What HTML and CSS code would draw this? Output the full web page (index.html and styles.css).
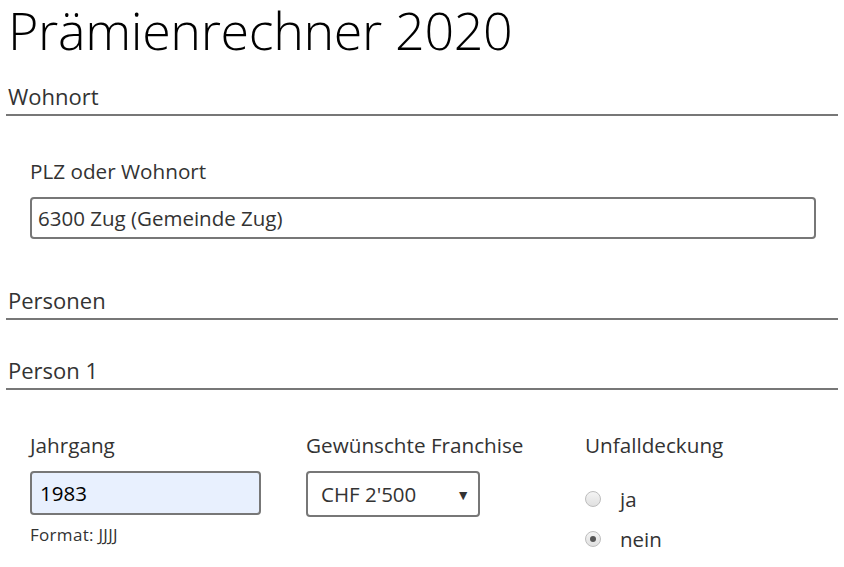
FILE: index.html
```html
<!DOCTYPE html>
<html lang="de">
<head>
<meta charset="utf-8">
<title>Prämienrechner 2020</title>
<link rel="stylesheet" href="styles.css">
</head>
<body>
<div class="page">
  <h1 class="title">Prämienrechner 2020</h1>

  <h2 class="section first">Wohnort</h2>
  <div class="fields">
    <div class="field wide">
      <label class="label" for="plz">PLZ oder Wohnort</label>
      <input class="input" id="plz" type="text" value="6300 Zug (Gemeinde Zug)">
    </div>
  </div>

  <h2 class="section persons">Personen</h2>
  <h2 class="section">Person 1</h2>
  <div class="fields grid">
    <div class="field">
      <label class="label" for="jahr">Jahrgang</label>
      <input class="input year" id="jahr" type="text" value="1983">
      <div class="hint">Format: JJJJ</div>
    </div>
    <div class="field">
      <label class="label" for="fr">Gewünschte Franchise</label>
      <div class="select">
        <span class="select-value">CHF 2'500</span>
        <span class="select-arrow">▼</span>
      </div>
    </div>
    <div class="field">
      <div class="label">Unfalldeckung</div>
      <div class="radios">
        <label class="radio"><span class="dot"></span><span>ja</span></label>
        <label class="radio"><span class="dot checked"></span><span>nein</span></label>
      </div>
    </div>
  </div>
</div>
</body>
</html>
```
FILE: styles.css
```css
html, body {
  margin: 0;
  padding: 0;
  background: #fff;
}
body {
  font-family: "Open Sans", "Noto Sans", sans-serif;
  color: #333;
}
.page {
  padding: 0 6px;
  width: 832px;
}
.title {
  margin: 0;
  padding: 0 0 0 2px;
  font-size: 52px;
  line-height: 60px;
  font-weight: 300;
  color: #000;
  letter-spacing: -0.35px;
}
.section {
  margin: 36px 0 0 0;
  padding: 0 0 4px 2px;
  font-size: 22px;
  font-weight: 400;
  line-height: 28px;
  color: #333;
  border-bottom: 2px solid #777;
}
.section.first {
  margin-top: 22px;
}
.section.persons {
  margin-top: 47px;
}
.fields {
  padding: 41px 0 0 24px;
}
.field {
  display: flex;
  flex-direction: column;
}
.wide {
  width: 786px;
}
.label {
  font-size: 20.7px;
  line-height: 28px;
  color: #333;
  margin-bottom: 12px;
}
.input {
  box-sizing: border-box;
  height: 42px;
  border: 2px solid #777;
  border-radius: 4px;
  padding: 0 6px;
  font-family: inherit;
  font-size: 20.5px;
  color: #333;
  background: #fff;
  outline: none;
}
.grid {
  display: grid;
  grid-template-columns: 276px 279px 250px;
}
.year {
  width: 231px;
  height: 44px;
  background: #e8f0fe;
  color: #000;
  padding-left: 8px;
}
.hint {
  font-size: 17px;
  line-height: 22px;
  margin-top: 9px;
  letter-spacing: 0.3px;
}
.select {
  box-sizing: border-box;
  width: 174px;
  height: 46px;
  border: 2px solid #777;
  border-radius: 4px;
  display: flex;
  align-items: center;
  justify-content: space-between;
  padding: 0 8px 0 13px;
  font-size: 20.5px;
}
.select-arrow {
  font-size: 14px;
  color: #333;
}
.radios {
  display: flex;
  flex-direction: column;
  gap: 12px;
  margin-top: 14px;
}
.radio {
  display: flex;
  align-items: center;
  gap: 19px;
  font-size: 20.5px;
  line-height: 28px;
}
.dot {
  box-sizing: border-box;
  width: 16px;
  height: 16px;
  border-radius: 50%;
  border: 1px solid #bdbdbd;
  background: linear-gradient(#f4f4f4, #e0e0e0);
  position: relative;
}
.dot.checked::after {
  content: "";
  position: absolute;
  left: 4px;
  top: 4px;
  width: 6px;
  height: 6px;
  border-radius: 50%;
  background: #555;
}
```
